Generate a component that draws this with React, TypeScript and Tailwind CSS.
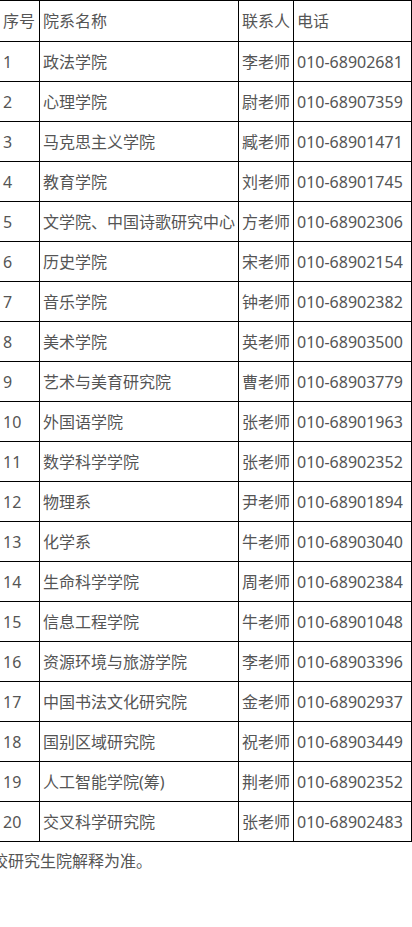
import React from 'react'

type Row = [string, string, string, string]

const rows: Row[] = [
  ['1', '政法学院', '李老师', '010-68902681'],
  ['2', '心理学院', '尉老师', '010-68907359'],
  ['3', '马克思主义学院', '臧老师', '010-68901471'],
  ['4', '教育学院', '刘老师', '010-68901745'],
  ['5', '文学院、中国诗歌研究中心', '方老师', '010-68902306'],
  ['6', '历史学院', '宋老师', '010-68902154'],
  ['7', '音乐学院', '钟老师', '010-68902382'],
  ['8', '美术学院', '英老师', '010-68903500'],
  ['9', '艺术与美育研究院', '曹老师', '010-68903779'],
  ['10', '外国语学院', '张老师', '010-68901963'],
  ['11', '数学科学学院', '张老师', '010-68902352'],
  ['12', '物理系', '尹老师', '010-68901894'],
  ['13', '化学系', '牛老师', '010-68903040'],
  ['14', '生命科学学院', '周老师', '010-68902384'],
  ['15', '信息工程学院', '牛老师', '010-68901048'],
  ['16', '资源环境与旅游学院', '李老师', '010-68903396'],
  ['17', '中国书法文化研究院', '金老师', '010-68902937'],
  ['18', '国别区域研究院', '祝老师', '010-68903449'],
  ['19', '人工智能学院(筹)', '荆老师', '010-68902352'],
  ['20', '交叉科学研究院', '张老师', '010-68902483']
]

const cell = 'border border-black px-[3px] text-left font-normal whitespace-nowrap'

export default function App() {
  return (
    <div
      className="min-h-[927px] w-[412px] overflow-hidden bg-white text-[16px] text-[#555]"
      style={{ fontFamily: '"Noto Sans", "Noto Sans CJK SC", sans-serif' }}
    >
      <table className="-ml-px w-[412px] table-fixed border-collapse">
        <colgroup>
          <col className="w-[40px]" />
          <col className="w-[199px]" />
          <col className="w-[55px]" />
          <col className="w-[118px]" />
        </colgroup>
        <thead>
          <tr className="h-[41px]">
            <th className={cell}>序号</th>
            <th className={cell}>院系名称</th>
            <th className={cell}>联系人</th>
            <th className={cell}>电话</th>
          </tr>
        </thead>
        <tbody>
          {rows.map(r => (
            <tr key={r[0]} className="h-[40px]">
              <td className={cell}>{r[0]}</td>
              <td className={cell}>{r[1]}</td>
              <td className={cell}>{r[2]}</td>
              <td className={cell}>{r[3]}</td>
            </tr>
          ))}
        </tbody>
      </table>

      <p className="-ml-2 mt-[7px] whitespace-nowrap leading-[24px]">
        校研究生院解释为准。
      </p>
    </div>
  )
}
